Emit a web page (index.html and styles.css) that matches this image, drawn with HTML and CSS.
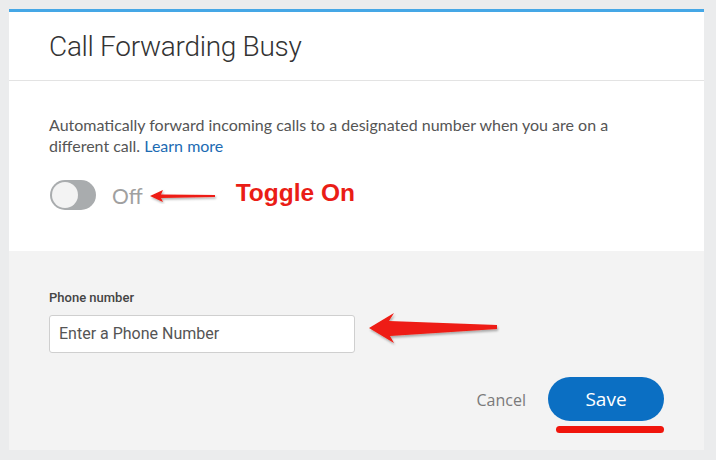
FILE: index.html
```html
<!DOCTYPE html>
<html>
<head>
<meta charset="utf-8">
<link rel="stylesheet" href="styles.css">
</head>
<body>
<div class="card">
  <div class="card-header">
    <h1 class="title">Call Forwarding Busy</h1>
  </div>
  <div class="card-body">
    <p class="desc">Automatically forward incoming calls to a designated number when you are on a different call. <a class="link" href="#">Learn more</a></p>
    <div class="toggle-row">
      <span class="toggle"><span class="knob"></span></span>
      <span class="toggle-label">Off</span>
      <span class="annot">
        <svg class="arrow-small" width="70" height="16" viewBox="0 0 70 16">
          <defs>
            <filter id="sh1" x="-10%" y="-50%" width="130%" height="200%">
              <feDropShadow dx="1" dy="1.5" stdDeviation="1" flood-color="#000" flood-opacity="0.35"/>
            </filter>
          </defs>
          <polygon filter="url(#sh1)" fill="#ee1c12" points="1,8 14,2 12,6.5 66,7 66,9 12,10 14,14"/>
        </svg>
        <span class="annot-text">Toggle On</span>
      </span>
    </div>
  </div>
  <div class="card-footer">
    <label class="field-label">Phone number</label>
    <div class="input-row">
      <div class="input">Enter a Phone Number</div>
      <svg class="arrow-big" width="140" height="40" viewBox="0 0 140 40">
        <defs>
          <filter id="sh2" x="-10%" y="-30%" width="130%" height="170%">
            <feDropShadow dx="1" dy="2" stdDeviation="1.2" flood-color="#000" flood-opacity="0.3"/>
          </filter>
        </defs>
        <polygon filter="url(#sh2)" fill="#ee1c12" points="2,17 27,2 22,10 130,14 130,18 23,25 27,32"/>
      </svg>
    </div>
    <div class="actions">
      <span class="cancel">Cancel</span>
      <span class="save-wrap">
        <button class="save">Save</button>
        <span class="underline"></span>
      </span>
    </div>
  </div>
</div>
</body>
</html>
```
FILE: styles.css
```css
html, body {
  margin: 0;
  padding: 0;
}
body {
  background: #ebeced;
  padding: 9px 12px 10px 9px;
  width: 716px;
  height: 460px;
  box-sizing: border-box;
  font-family: "Open Sans", "Lato", sans-serif;
}
.card {
  background: #fff;
  border-top: 3px solid #45a7e6;
  height: 441px;
  box-sizing: border-box;
  display: flex;
  flex-direction: column;
}
.card-header {
  height: 69px;
  box-sizing: border-box;
  border-bottom: 1px solid #e3e3e3;
  padding: 19px 40px 0;
}
.title {
  margin: 0;
  font-family: "Roboto", sans-serif;
  font-weight: 300;
  font-size: 28px;
  line-height: 32px;
  color: #333;
  letter-spacing: -0.3px;
}
.card-body {
  height: 170px;
  box-sizing: border-box;
  padding: 33px 40px 0;
}
.desc {
  margin: 0;
  font-family: "Lato", sans-serif;
  font-size: 16px;
  line-height: 21px;
  color: #555;
  width: 590px;
}
.link {
  color: #1c6bb3;
  text-decoration: none;
}
.toggle-row {
  display: flex;
  align-items: center;
  margin-top: 24px;
}
.toggle {
  width: 46px;
  height: 30px;
  border-radius: 15px;
  background: #a9acae;
  display: flex;
  align-items: center;
  padding: 0 2px;
  box-sizing: border-box;
  margin-left: 1px;
}
.knob {
  width: 26px;
  height: 26px;
  border-radius: 50%;
  background: #f3f3f3;
}
.toggle-label {
  font-family: "Lato", sans-serif;
  font-size: 21px;
  color: #a0a0a0;
  margin-left: 16px;
}
.annot {
  display: flex;
  align-items: center;
  margin-left: 6px;
}
.arrow-small {
  display: block;
  margin-top: 2px;
}
.annot-text {
  font-family: "Liberation Sans", Arial, sans-serif;
  font-weight: bold;
  font-size: 24.5px;
  color: #ea1d16;
  margin-left: 17px;
  margin-top: -4px;
}
.card-footer {
  flex: 1;
  background: #f3f3f3;
  padding: 39px 40px 0;
  display: flex;
  flex-direction: column;
}
.field-label {
  font-family: "Roboto", sans-serif;
  font-size: 13px;
  font-weight: 500;
  color: #444;
  line-height: 16px;
}
.input-row {
  display: flex;
  align-items: center;
  margin-top: 9px;
}
.input {
  width: 306px;
  height: 38px;
  box-sizing: border-box;
  border: 1px solid #cfcfcf;
  border-radius: 3px;
  background: #fff;
  font-family: "Roboto", sans-serif;
  font-size: 16px;
  color: #555;
  padding: 0 9px;
  line-height: 36px;
}
.arrow-big {
  display: block;
  margin-left: 12px;
  margin-top: -6px;
}
.actions {
  display: flex;
  justify-content: flex-end;
  align-items: flex-start;
  margin-top: 24px;
}
.cancel {
  font-family: "Open Sans", sans-serif;
  font-size: 16px;
  color: #7a7a7a;
  margin-top: 12px;
  margin-right: 22px;
}
.save-wrap {
  display: flex;
  flex-direction: column;
  align-items: flex-end;
}
.save {
  width: 116px;
  height: 44px;
  border: 0;
  border-radius: 22px;
  background: #0b6fc3;
  color: #fff;
  font-family: "Open Sans", sans-serif;
  font-size: 19px;
  padding: 0;
}
.underline {
  display: block;
  width: 108px;
  height: 7px;
  border-radius: 4px;
  background: #f0150c;
  margin-top: 5px;
}
```
